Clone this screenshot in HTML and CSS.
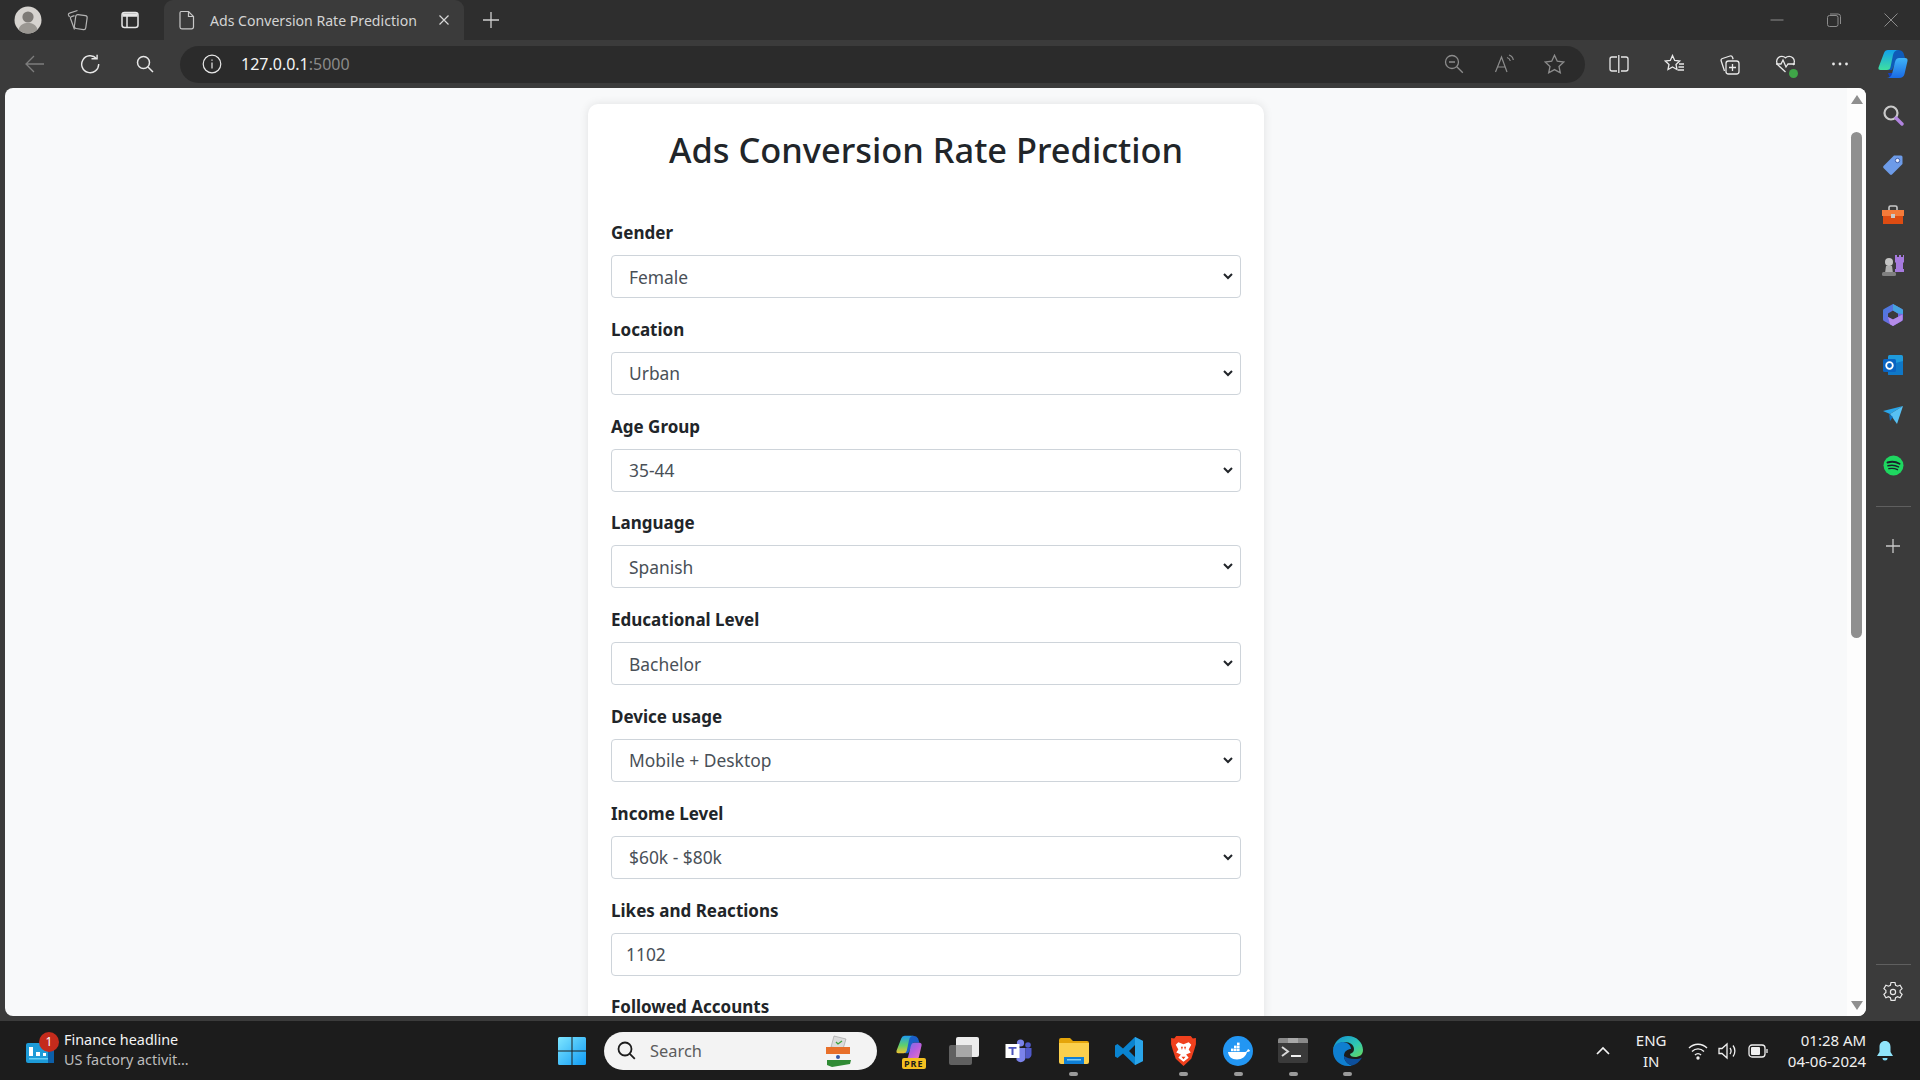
FILE: index.html
```html
<!DOCTYPE html>
<html lang="en">
<head>
    <meta charset="UTF-8">
    <title>Ads Conversion Rate Prediction</title>
    <link rel="stylesheet" href="styles.css">
</head>
<body>
    <div class="tabstrip">
        <div class="avatar">
            <svg width="28" height="28" viewBox="0 0 28 28"><circle cx="14" cy="14" r="13.5" fill="#d6d3cf"/><circle cx="14" cy="11" r="5.6" fill="#7d7a76"/><path d="M4.5 23.5c1.5-5 5-6.5 9.5-6.500s8 1.500 9.500 6.500a13.500 13.500 0 0 1-19 0z" fill="#9a9792"/></svg>
        </div>
        <div class="strip-btn strip-first">
            <svg width="22" height="22" viewBox="0 0 22 22" fill="none" stroke="#b4b4b4" stroke-width="1.2"><path d="M7.500 20.500 3.500 9.500a1.500 1.500 0 0 1 1-1.900l3-1"/><path d="M2.500 8 1.500 6a1.500 1.500 0 0 1 1-1.900L10.500 1.500"/><rect x="8" y="6" width="11.500" height="14" rx="2" transform="rotate(8 13 13)"/></svg>
        </div>
        <div class="strip-btn strip-second">
            <svg width="20" height="20" viewBox="0 0 20 20" fill="none" stroke="#e6e6e6" stroke-width="1.500"><rect x="2" y="2.500" width="16" height="15" rx="2.500"/><path d="M2.500 5h15" stroke-width="3.500"/><path d="M7 6v11"/></svg>
        </div>
        <div class="tab">
            <svg class="tab-icon" width="18" height="20" viewBox="0 0 18 20" fill="none" stroke="#c8c8c8" stroke-width="1.200"><path d="M3 1.500h7.500L15.500 6.500v10.500a1.800 1.800 0 0 1-1.800 1.800H3.800A1.800 1.800 0 0 1 2 17V3a1.500 1.500 0 0 1 1-1.500z"/><path d="M10.500 1.500v5h5"/></svg>
            <span class="tab-title">Ads Conversion Rate Prediction</span>
            <svg class="tab-close" width="12" height="12" viewBox="0 0 12 12" stroke="#d8d8d8" stroke-width="1.200"><path d="M1.500 1.500l9 9M10.500 1.500l-9 9"/></svg>
        </div>
        <div class="new-tab">
            <svg width="18" height="18" viewBox="0 0 18 18" stroke="#d0d0d0" stroke-width="1.300"><path d="M9 1v16M1 9h16"/></svg>
        </div>
        <div class="window-btns">
            <svg width="14" height="14" viewBox="0 0 14 14" stroke="#8c8c8c" stroke-width="1"><path d="M0.500 7h13"/></svg>
            <svg width="14" height="14" viewBox="0 0 14 14" fill="none" stroke="#8c8c8c" stroke-width="1"><rect x="0.500" y="2.500" width="10.500" height="11" rx="2"/><path d="M3 1h8a2.500 2.500 0 0 1 2.500 2.500V11"/></svg>
            <svg width="14" height="14" viewBox="0 0 14 14" stroke="#8c8c8c" stroke-width="1"><path d="M0.500 0.500l13 13M13.500 0.500l-13 13"/></svg>
        </div>
    </div>

    <div class="toolbar">
        <div class="nav-btn">
            <svg width="20" height="18" viewBox="0 0 20 18" fill="none" stroke="#7d7d7d" stroke-width="1.300"><path d="M1 9h18M9 1 1 9l8 8"/></svg>
        </div>
        <div class="nav-btn">
            <svg width="20" height="20" viewBox="0 0 20 20" fill="none" stroke="#e8e8e8" stroke-width="1.400"><path d="M16.500 4.500A8.500 8.500 0 1 0 18.700 10"/><path d="M11.500 4.800h5.600V.8"/></svg>
        </div>
        <div class="nav-btn">
            <svg width="18" height="18" viewBox="0 0 18 18" fill="none" stroke="#e8e8e8" stroke-width="1.500"><circle cx="7.500" cy="7.500" r="6"/><path d="m12 12 5 5"/></svg>
        </div>
        <div class="address">
            <svg class="info" width="20" height="20" viewBox="0 0 20 20" fill="none" stroke="#e8e8e8" stroke-width="1.200"><circle cx="10" cy="10" r="8.800"/><path d="M10 8.500v6M10 5.400v1.400"/></svg>
            <span class="host">127.0.0.1</span><span class="port">:5000</span>
            <div class="address-icons">
                <svg width="20" height="20" viewBox="0 0 20 20" fill="none" stroke="#8c8c8c" stroke-width="1.300"><circle cx="8" cy="8" r="6.500"/><path d="m12.800 12.800 6 6M5 8h6"/></svg>
                <svg width="20" height="20" viewBox="0 0 20 20" fill="none" stroke="#8c8c8c" stroke-width="1.200"><path d="M1.500 18 7.500 3l5.500 15M3.500 13h8"/><path d="M13 3.500c2 .5 3 2 3.300 3.500M15 1c2.500.8 4 2.800 4.300 5"/></svg>
                <svg width="21" height="20" viewBox="0 0 21 20" fill="none" stroke="#8c8c8c" stroke-width="1.300"><path d="m10.500 1.200 2.800 6 6.500.8-4.800 4.400 1.300 6.400-5.800-3.200-5.800 3.200 1.300-6.400L1.200 8l6.500-.8z"/></svg>
            </div>
        </div>
        <div class="tool-icons">
            <svg width="20" height="20" viewBox="0 0 20 20" fill="none" stroke="#e8e8e8" stroke-width="1.300"><path d="M8 3H3a2 2 0 0 0-2 2v10a2 2 0 0 0 2 2h5M12 3h5a2 2 0 0 1 2 2v10a2 2 0 0 1-2 2h-5M9.800 1v18"/></svg>
            <svg width="21" height="20" viewBox="0 0 21 20" fill="none" stroke="#e8e8e8" stroke-width="1.300"><path d="m8.500 1.500 2.200 5 5 .6-3.700 3.400 1 5-4.500-2.600L4 15.500l1-5L1.300 7.100l5-.6z"/><path d="M15 10h5M14.500 13h5.500M14 16h6"/></svg>
            <svg width="21" height="21" viewBox="0 0 21 21" fill="none" stroke="#e8e8e8" stroke-width="1.300"><path d="M5.500 17 2.200 7a2 2 0 0 1 1.300-2.500L11 2a2 2 0 0 1 2.500 1.200l.6 2"/><rect x="7" y="7" width="13" height="13" rx="2.500"/><path d="M13.500 10v7M10 13.500h7"/></svg>
            <span class="health">
                <svg width="21" height="21" viewBox="0 0 21 21" fill="none" stroke="#e8e8e8" stroke-width="1.300"><path d="M10.500 18 3 11a5.200 5.200 0 0 1 7.500-7.200A5.200 5.200 0 0 1 18 11"/><path d="M1 10h5l2-4 3 7 2-3h7"/></svg>
                <span class="health-ok"></span>
            </span>
            <svg width="20" height="20" viewBox="0 0 20 20" fill="#e8e8e8"><circle cx="3.500" cy="10" r="1.400"/><circle cx="10" cy="10" r="1.400"/><circle cx="16.500" cy="10" r="1.400"/></svg>
            <svg class="copilot" width="30" height="30" viewBox="0 0 30 30"><defs><linearGradient id="cpA" x1="0" y1="0" x2="0" y2="1"><stop offset="0" stop-color="#12a0ec"/><stop offset="1" stop-color="#3fe0a0"/></linearGradient><linearGradient id="cpB" x1="0" y1="0" x2="0" y2="1"><stop offset="0" stop-color="#3fb4f8"/><stop offset="1" stop-color="#1a6ae4"/></linearGradient></defs><path d="M15 4Q16 1 20 1t5.500 3L27 9H20l-6 12-4 0z" fill="#0f5bb8"/><path d="M10 24H20l-1.500 5H12z" fill="#1440c0"/><path d="M6 4Q7 1 10 1H20Q16 1.500 15 6L12.500 18Q12 21 9 21H2.500Q0 21 .5 18.500Z" fill="url(#cpA)"/><path d="M21 9H27Q30 9 29.500 12L26.500 25Q25.500 29 21 29H9Q13 28.500 14 25L17 13Q18 9 21 9Z" fill="url(#cpB)"/></svg>
        </div>
    </div>

    <div class="middle">
        <main class="page">
            <div class="viewport">
                <div class="card">
                    <h1>Ads Conversion Rate Prediction</h1>
                    <form>
                        <div class="field">
                            <label for="gender">Gender</label>
                            <select id="gender"><option>Female</option><option>Male</option></select>
                        </div>
                        <div class="field">
                            <label for="location">Location</label>
                            <select id="location"><option>Urban</option><option>Rural</option></select>
                        </div>
                        <div class="field">
                            <label for="age">Age Group</label>
                            <select id="age"><option>35-44</option><option>25-34</option></select>
                        </div>
                        <div class="field">
                            <label for="language">Language</label>
                            <select id="language"><option>Spanish</option><option>English</option></select>
                        </div>
                        <div class="field">
                            <label for="education">Educational Level</label>
                            <select id="education"><option>Bachelor</option><option>Master</option></select>
                        </div>
                        <div class="field">
                            <label for="device">Device usage</label>
                            <select id="device"><option>Mobile + Desktop</option><option>Mobile</option></select>
                        </div>
                        <div class="field">
                            <label for="income">Income Level</label>
                            <select id="income"><option>$60k - $80k</option><option>$40k - $60k</option></select>
                        </div>
                        <div class="field">
                            <label for="likes">Likes and Reactions</label>
                            <input id="likes" type="text" value="1102">
                        </div>
                        <div class="field">
                            <label>Followed Accounts</label>
                        </div>
                    </form>
                </div>
            </div>
            <div class="scrollbar">
                <span class="arrow-up"></span>
                <div class="thumb"></div>
                <span class="arrow-down"></span>
            </div>
        </main>
        <aside class="sidebar">
            <div class="side-item"><svg width="22" height="22" viewBox="0 0 22 22" fill="none"><circle cx="9" cy="9" r="6.500" stroke="#c9c9c9" stroke-width="2.200"/><path d="m14 14 6 6" stroke="#b184e0" stroke-width="3.400" stroke-linecap="round"/></svg></div>
            <div class="side-item"><svg width="22" height="22" viewBox="0 0 22 22"><path d="M12 1.500h7a1.500 1.500 0 0 1 1.500 1.500v7L10 20.500a1.500 1.500 0 0 1-2 0L1.500 14a1.500 1.500 0 0 1 0-2z" fill="#6d9be8"/><circle cx="15.500" cy="6.500" r="2.200" fill="#e8eefc" stroke="#3d5da8"/></svg></div>
            <div class="side-item"><svg width="24" height="22" viewBox="0 0 24 22"><path d="M8 6V3.500A1.500 1.500 0 0 1 9.500 2h5A1.500 1.500 0 0 1 16 3.500V6" fill="none" stroke="#c9c9c9" stroke-width="1.600"/><path d="M1 6h22v6H1z" fill="#f47b3a"/><path d="M2 12h20v8H2z" fill="#dd4c12"/><rect x="10" y="10" width="4" height="4" fill="#c9c9c9"/></svg></div>
            <div class="side-item"><svg width="24" height="24" viewBox="0 0 24 24"><path d="M14 2h2v2h2V2h2v2h2V2h1v7l-1 1v6h1v3H14v-3h1v-6l-1-1z" fill="#a67ade"/><circle cx="8" cy="9" r="4" fill="#c4c4c4"/><path d="M5 13h6l1 7H4z" fill="#b0b0b0"/><rect x="1" y="19" width="14" height="4" rx="1.500" fill="#808080"/></svg></div>
            <div class="side-item"><svg width="22" height="24" viewBox="0 0 22 24"><defs><linearGradient id="msA" x1="0" y1="0" x2="1" y2="1"><stop offset="0" stop-color="#3f7fe0"/><stop offset="1" stop-color="#8c5ce0"/></linearGradient></defs><path d="M11 1 20 6a2 2 0 0 1 1 2v8a2 2 0 0 1-1 2l-9 5-9-5a2 2 0 0 1-1-2V8a2 2 0 0 1 1-2z" fill="url(#msA)"/><path d="M11 7.500 16 10.500v3.500l-5 2.500-5-2.500v-3.500z" fill="#3b3b3b"/><path d="M6 14l5 2.500 9.500-5V16a2 2 0 0 1-1 2L11 23l-3-1.800z" fill="#b48be8"/><path d="M11 1l9 5a2 2 0 0 1 1 2v3l-5-.5-5-3z" fill="#45a3e0"/></svg></div>
            <div class="side-item"><svg width="22" height="22" viewBox="0 0 22 22"><rect x="6" y="1" width="15" height="20" rx="1.500" fill="#1f9bdc"/><path d="M6 11 21 7v13a1 1 0 0 1-1 1H7a1 1 0 0 1-1-1z" fill="#0f78c8"/><rect x="1" y="5" width="13" height="13" rx="1.500" fill="#0a64c2"/><circle cx="7.500" cy="11.500" r="3.300" fill="none" stroke="#fff" stroke-width="1.800"/></svg></div>
            <div class="side-item"><svg width="22" height="20" viewBox="0 0 22 20"><path d="M1 6 21 1 8 9z" fill="#2aa6ea"/><path d="M8 9 21 1 15 19z" fill="#57c1f4"/><path d="M7 9l1 7 3-4z" fill="#0e6fbe"/></svg></div>
            <div class="side-item"><svg width="21" height="21" viewBox="0 0 21 21" fill="none"><circle cx="10.500" cy="10.500" r="10" fill="#1ed760"/><path d="M4.500 7.500c4-1.200 8.500-.8 12 1.200" stroke="#19212a" stroke-width="1.900" stroke-linecap="round"/><path d="M5 10.800c3.500-1 7.300-.6 10.500 1.100" stroke="#19212a" stroke-width="1.600" stroke-linecap="round"/><path d="M5.800 13.700c3-.7 6-.4 8.700 1" stroke="#19212a" stroke-width="1.300" stroke-linecap="round"/></svg></div>
            <hr class="side-rule">
            <div class="side-item side-add"><svg width="16" height="16" viewBox="0 0 16 16" stroke="#c9c9c9" stroke-width="1.300"><path d="M8 1v14M1 8h14"/></svg></div>
            <hr class="side-rule side-rule-low">
            <div class="side-item side-gear"><svg width="22" height="22" viewBox="0 0 22 22" fill="none" stroke="#e8e8e8" stroke-width="1.200"><path d="M9 1.500h4l.6 2.800 1.900.9 2.600-1 2 3.400-2 1.800v2.100l2 1.800-2 3.400-2.600-1-1.900.9-.6 2.800H9l-.6-2.800-1.900-.9-2.600 1-2-3.400 2-1.800V9.400l-2-1.800 2-3.400 2.600 1 1.900-.9z"/><circle cx="11" cy="11" r="2.600"/></svg></div>
        </aside>
    </div>

    <footer class="taskbar">
        <div class="news">
            <span class="news-icon">
                <svg width="28" height="20" viewBox="0 0 28 20"><rect width="28" height="20" rx="2" fill="#1d9bd8"/><rect x="22" width="6" height="20" fill="#0c5fa8"/><rect x="3" y="4" width="4" height="9" fill="#fff"/><rect x="10" y="9" width="4" height="4" fill="#fff"/><rect x="17" y="10" width="3" height="3" fill="#fff"/><rect x="3" y="15" width="19" height="1.500" fill="#65d0f5"/></svg>
                <span class="news-badge">1</span>
            </span>
            <div class="news-text">
                <div class="news-head">Finance headline</div>
                <div class="news-sub">US factory activit...</div>
            </div>
        </div>

        <svg class="start" width="28" height="28" viewBox="0 0 28 28"><defs><linearGradient id="winA" x1="0" y1="0" x2="1" y2="1"><stop offset="0" stop-color="#7fe6ff"/><stop offset="1" stop-color="#0f9bf5"/></linearGradient></defs><path d="M1.500 0H13.500V13.500H0V1.500A1.500 1.500 0 0 1 1.500 0zM14.500 0H26.500A1.500 1.500 0 0 1 28 1.500V13.500H14.500zM0 14.500H13.500V28H1.500A1.500 1.500 0 0 1 0 26.500zM14.500 14.500H28V26.500A1.500 1.500 0 0 1 26.500 28H14.500z" fill="url(#winA)"/></svg>

        <div class="search">
            <svg width="19" height="19" viewBox="0 0 19 19" fill="none" stroke="#1c1c1c" stroke-width="1.800"><circle cx="8" cy="8" r="6.500"/><path d="m12.800 12.800 5 5"/></svg>
            <span class="search-text">Search</span>
            <svg class="search-art" width="26" height="32" viewBox="0 0 26 32"><path d="M9 1 21 4 18 14 6 12z" fill="#dcdcdc" stroke="#9a9a9a" stroke-width=".6"/><path d="m11 7 2 2 4-3" fill="none" stroke="#3da23d" stroke-width="1.300"/><path d="M1 12h24v7H1z" fill="#e8702a"/><path d="M1 19h24v6H1z" fill="#f4f4f4"/><path d="M2 25h24l-1 4-18 3-5-2z" fill="#2f8a34"/><circle cx="13" cy="22" r="2" fill="#3558a8"/></svg>
        </div>

        <div class="apps">
            <span class="app">
                <svg class="app-copilot" width="28" height="26" viewBox="0 0 30 30"><defs><linearGradient id="cpC" x1="0" y1="0" x2="0" y2="1"><stop offset="0" stop-color="#1f9cf0"/><stop offset=".55" stop-color="#5fd06a"/><stop offset="1" stop-color="#f2c230"/></linearGradient><linearGradient id="cpD" x1="0" y1="0" x2="1" y2="1"><stop offset="0" stop-color="#5f7ce8"/><stop offset=".5" stop-color="#b45ee0"/><stop offset="1" stop-color="#f07ac0"/></linearGradient></defs><path d="M15 4Q16 1 20 1t5.500 3L27 9H20l-6 12-4 0z" fill="#1a5fc8"/><path d="M6 4Q7 1 10 1H20Q16 1.500 15 6L12.500 18Q12 21 9 21H2.500Q0 21 .5 18.500Z" fill="url(#cpC)"/><path d="M21 9H27Q30 9 29.500 12L26.500 25Q25.500 29 21 29H9Q13 28.500 14 25L17 13Q18 9 21 9Z" fill="url(#cpD)"/></svg>
                <span class="pre">PRE</span>
            </span>
            <span class="app">
                <svg width="30" height="28" viewBox="0 0 30 28"><rect x="0" y="8" width="23" height="20" rx="2" fill="#606060"/><rect x="7" y="0" width="23" height="20" rx="2" fill="#ececec"/><rect x="7" y="8" width="16" height="12" fill="#a8a8a8"/></svg>
            </span>
            <span class="app">
                <svg width="27" height="24" viewBox="0 0 26 24"><circle cx="15" cy="4" r="3.600" fill="#7b83eb"/><circle cx="22.500" cy="6" r="2.800" fill="#5059c9"/><path d="M11 9h9v10a5 5 0 0 1-9 2z" fill="#7b83eb"/><path d="M20 9h6v7a4 4 0 0 1-6 3z" fill="#5059c9"/><rect x="0" y="5" width="14" height="14" fill="#fff"/><path d="M3 8h8v1.800H8V16H6V9.800H3z" fill="#4b53bc"/></svg>
            </span>
            <span class="app app-running">
                <svg width="30" height="28" viewBox="0 0 30 28"><path d="M0 3a2 2 0 0 1 2-2h9l3 3h14a2 2 0 0 1 2 2v4H0z" fill="#e5a50a"/><path d="M0 6h30v19a2 2 0 0 1-2 2H2a2 2 0 0 1-2-2z" fill="#fbd04d"/><path d="M5 20h20v7H5z" fill="#0f7fd6"/><rect x="8" y="22" width="14" height="1.500" fill="#7fcdf5"/></svg>
            </span>
            <span class="app">
                <svg width="28" height="28" viewBox="0 0 28 28"><path d="M20 0 28 4v20l-8 4L8 16.500 2.500 21 0 19.500V8.500L2.500 7 8 11.500zM20 8l-6 6 6 6z" fill="#0a84d0"/><path d="M20 0 28 4v20l-8 4z" fill="#2aa5ea"/></svg>
            </span>
            <span class="app app-running">
                <svg width="25" height="30" viewBox="0 0 24 29"><path d="M5 0h14l2 2.500L24 2v6l-1.500 5-3 9L12 29l-7.500-7-3-9L0 8V2l3 .5z" fill="#f0401d"/><path d="M12 8 7 6 4.500 8.500 7 13l-2 3 4.500 2L7 21l5 4 5-4-2.500-3 4.500-2-2-3 2.500-4.500L17 6z" fill="#fff"/><path d="M9.500 10.500h2l-1 3zM12.500 10.500h2l-1 3zM10 20h4l-2 2.500z" fill="#f0401d"/></svg>
            </span>
            <span class="app app-running">
                <svg width="30" height="30" viewBox="0 0 30 30"><circle cx="15" cy="15" r="15" fill="#2296f3"/><path d="M5 16h17c1.500 0 2.500-1.500 3-3 1 .5 2 1.200 2 2-1 .6-2 .9-3 1-1 4.500-5 7.500-10 7.500-5.500 0-8.500-3-9-7.500z" fill="#fff"/><g fill="#fff"><rect x="8" y="12.600" width="2.600" height="2.600"/><rect x="11" y="12.600" width="2.600" height="2.600"/><rect x="14" y="12.600" width="2.600" height="2.600"/><rect x="11" y="9.600" width="2.600" height="2.600"/><rect x="14" y="9.600" width="2.600" height="2.600"/><rect x="14" y="6.600" width="2.600" height="2.600"/></g></svg>
            </span>
            <span class="app app-running">
                <svg width="30" height="25" viewBox="0 0 30 25"><rect width="30" height="25" rx="2" fill="#3a3a3a"/><path d="M0 2a2 2 0 0 1 2-2h26a2 2 0 0 1 2 2v3H0z" fill="#8a8a8a"/><path d="M10 0h10v5H10z" fill="#a8a8a8"/><path d="m4 9 6 4.500-6 4.500" fill="none" stroke="#d8d8d8" stroke-width="2"/><path d="M13 18h10" stroke="#f0f0f0" stroke-width="2"/></svg>
            </span>
            <span class="app app-running">
                <svg width="30" height="30" viewBox="0 0 30 30"><defs><linearGradient id="edA" x1="0" y1="0" x2="1" y2="1"><stop offset="0" stop-color="#0f8fd8"/><stop offset=".6" stop-color="#30c8b0"/><stop offset="1" stop-color="#6ad85a"/></linearGradient></defs><path d="M15 0C24 0 30 7 30 14 30 19 26 21 22 21 19 21 17 20 17 18 20 17 21 15 21 13 21 9 17 6 12 6 7 6 2 9 0 14 1 6 7 0 15 0Z" fill="url(#edA)"/><path d="M0 15C0 10 4 6 10 6c4 0 8 3 8 7-3 0-7 2-7 7 0 4 3 8 8 9.500-1 .4-3 .5-4 .5C6 30 0 23 0 15Z" fill="#0f7fd0"/><path d="M11 20c0 4 3 8 8 9.500 4-1 8-4 10-8-2 1-4 1.500-7 1.500-5 0-8-1-11-3z" fill="#0c4f9c"/></svg>
            </span>
        </div>

        <div class="tray">
            <svg class="tray-chevron" width="14" height="9" viewBox="0 0 14 9" fill="none" stroke="#f4f4f4" stroke-width="1.700"><path d="m1 8 6-6 6 6"/></svg>
            <div class="lang">ENG<br>IN</div>
            <svg width="20" height="18" viewBox="0 0 20 18" fill="none" stroke="#f0f0f0" stroke-width="1.400"><path d="M1 6c5-5 13-5 18 0M4 9.500c3.500-3.500 8.500-3.500 12 0M7 13c1.700-1.800 4.300-1.800 6 0"/><circle cx="10" cy="16" r="1" fill="#f0f0f0"/></svg>
            <svg width="20" height="18" viewBox="0 0 20 18" fill="none" stroke="#f0f0f0" stroke-width="1.300"><path d="M1 6.500v5h3l5 4.500V2L4 6.500z"/><path d="M12 6c1.300 1.800 1.300 4.200 0 6M15 3.500c2.500 3.200 2.500 7.800 0 11"/></svg>
            <svg width="20" height="14" viewBox="0 0 20 14" fill="none" stroke="#f0f0f0" stroke-width="1.300"><rect x="1" y="1" width="16" height="12" rx="3"/><rect x="3" y="3" width="9" height="8" rx="1" fill="#f0f0f0" stroke="none"/><path d="M19 5v4"/></svg>
            <div class="clock">01:28 AM<br>04-06-2024</div>
            <svg class="bell" width="16" height="20" viewBox="0 0 16 20"><path d="M8 0c3.500 0 5.500 2.500 5.500 6v5l2.500 4H0l2.500-4V6C2.500 2.500 4.500 0 8 0z" fill="#8fe4fb"/><path d="M5.500 17h5a2.500 2.500 0 0 1-5 0z" fill="#7fd8f5"/></svg>
        </div>
    </footer>
</body>
</html>
```

FILE: styles.css
```css
html, body {
    margin: 0;
    height: 1080px;
    overflow: hidden;
}
body {
    display: flex;
    flex-direction: column;
    font-family: "Noto Sans", "Open Sans", sans-serif;
    background-color: #3b3b3b;
}
svg {
    display: block;
    flex: none;
}

/* tab strip */
.tabstrip {
    display: flex;
    align-items: center;
    height: 40px;
    padding-left: 14px;
    background-color: #2e2e2e;
    flex: none;
}
.avatar {
    width: 28px;
}
.strip-btn {
    display: flex;
    justify-content: center;
}
.strip-first {
    width: 44px;
    margin-left: 14px;
}
.strip-second {
    width: 60px;
}
.tab {
    display: flex;
    align-items: center;
    align-self: stretch;
    width: 300px;
    margin-left: 4px;
    padding: 0 14px;
    box-sizing: border-box;
    background-color: #3b3b3b;
    border-radius: 9px 9px 0 0;
    flex: none;
}
.tab-title {
    flex: 1;
    margin-left: 14px;
    font-size: 14.1px;
    color: #d4d4d4;
    white-space: nowrap;
}
.new-tab {
    margin-left: 18px;
}
.window-btns {
    display: flex;
    gap: 43px;
    margin-left: auto;
    padding-right: 22px;
}

/* toolbar */
.toolbar {
    display: flex;
    align-items: center;
    height: 48px;
    padding-left: 7px;
    background-color: #3b3b3b;
    flex: none;
}
.nav-btn {
    display: flex;
    justify-content: center;
    width: 55px;
}
.address {
    display: flex;
    align-items: center;
    width: 1405px;
    height: 37px;
    margin-left: 8px;
    padding: 0 20px 0 22px;
    box-sizing: border-box;
    background-color: #2b2b2b;
    border-radius: 19px;
    font-size: 16px;
}
.info {
    margin-right: 19px;
}
.host {
    color: #f4f4f4;
}
.port {
    color: #8a8a8a;
}
.address-icons {
    display: flex;
    gap: 30px;
    margin-left: auto;
}
.tool-icons {
    display: flex;
    align-items: center;
    gap: 34.6px;
    margin-left: 24px;
}
.tool-icons .copilot {
    margin-left: -7px;
}
.health {
    position: relative;
    display: block;
}
.health-ok {
    position: absolute;
    right: -2px;
    bottom: -3px;
    width: 9px;
    height: 9px;
    border-radius: 50%;
    background-color: #3fa648;
}

/* page area */
.middle {
    display: flex;
    height: 928px;
    flex: none;
}
.page {
    display: flex;
    flex: 1;
    min-width: 0;
    margin-left: 5px;
    overflow: hidden;
    background-color: #f8f9fa;
    border-radius: 8px;
}
.viewport {
    flex: 1;
    min-width: 0;
    padding-top: 16px;
}
.card {
    width: 676px;
    margin-left: 583px;
    padding: 23px 23px 0;
    box-sizing: border-box;
    background-color: #fff;
    border-radius: 10px;
    box-shadow: 0 0 10px rgba(0, 0, 0, 0.1);
}
h1 {
    margin: 0 0 45px;
    font-size: 34.4px;
    font-weight: 500;
    line-height: 46px;
    text-align: center;
    color: #212529;
}
.field {
    height: 96.8px;
}
label {
    display: block;
    margin-bottom: 8px;
    font-size: 17px;
    font-weight: 700;
    line-height: 29px;
    color: #212529;
}
select, input {
    display: block;
    width: 100%;
    height: 43px;
    box-sizing: border-box;
    background-color: #fff;
    border: 1px solid #ced4da;
    border-radius: 4px;
    font-family: inherit;
    font-size: 17.4px;
    color: #495057;
}
select {
    padding: 0 28px 0 17px;
    appearance: none;
    background-image: url("data:image/svg+xml,%3Csvg xmlns='http://www.w3.org/2000/svg' width='10' height='7' viewBox='0 0 10 7'%3E%3Cpath d='M1 1l4 4 4-4' fill='none' stroke='%23212529' stroke-width='2'/%3E%3C/svg%3E");
    background-repeat: no-repeat;
    background-position: right 7px center;
}
input {
    padding: 0 14px;
}
.scrollbar {
    display: flex;
    flex-direction: column;
    align-items: center;
    width: 19px;
    padding-top: 7px;
    box-sizing: border-box;
    background-color: #fdfdfd;
}
.arrow-up {
    width: 0;
    height: 0;
    border: 6px solid transparent;
    border-top: none;
    border-bottom: 9px solid #8f8f8f;
}
.thumb {
    width: 11px;
    height: 506px;
    margin-top: 28px;
    background-color: #8f8f8f;
    border-radius: 6px;
}
.arrow-down {
    width: 0;
    height: 0;
    margin-top: auto;
    margin-bottom: 6px;
    border: 6px solid transparent;
    border-bottom: none;
    border-top: 9px solid #8f8f8f;
}

/* edge sidebar */
.sidebar {
    display: flex;
    flex-direction: column;
    align-items: center;
    width: 54px;
    padding-top: 2px;
    box-sizing: border-box;
    background-color: #3b3b3b;
}
.side-item {
    display: flex;
    align-items: center;
    justify-content: center;
    height: 50px;
    flex: none;
}
.side-rule {
    width: 35px;
    height: 1px;
    margin: 16px 0 14px;
    border: none;
    background-color: #5f5f5f;
    flex: none;
}
.side-rule-low {
    margin: auto 0 3px;
}
.side-gear {
    height: 48px;
}

/* taskbar */
.taskbar {
    display: flex;
    align-items: center;
    height: 59px;
    margin-top: 5px;
    background-color: #1c1c1c;
    flex: none;
}
.news {
    display: flex;
    align-items: center;
    width: 558px;
    padding-left: 26px;
    box-sizing: border-box;
}
.news-icon {
    position: relative;
    display: block;
    margin-top: 4px;
}
.news-badge {
    position: absolute;
    top: -11px;
    left: 13px;
    width: 20px;
    height: 20px;
    background-color: #c42b1c;
    border-radius: 50%;
    font-size: 12px;
    line-height: 20px;
    text-align: center;
    color: #fff;
}
.news-text {
    margin-top: -2px;
    margin-left: 10px;
    font-size: 14.4px;
    line-height: 20px;
}
.news-head {
    color: #f4f4f4;
}
.news-sub {
    color: #bdbdbd;
}
.search {
    display: flex;
    align-items: center;
    width: 273px;
    height: 38px;
    margin-left: 18px;
    padding: 0 26px 0 13px;
    box-sizing: border-box;
    background-color: #f3f3f3;
    border-radius: 19px;
}
.search-text {
    margin-left: 14px;
    font-size: 16.4px;
    color: #5c5c5c;
}
.search-art {
    margin-left: auto;
}
.apps {
    display: flex;
    align-items: center;
    margin-left: 5px;
}
.app {
    position: relative;
    display: flex;
    align-items: center;
    justify-content: center;
    width: 54.8px;
    height: 40px;
}
.app-running::after {
    content: "";
    position: absolute;
    left: 23px;
    bottom: -5px;
    width: 9px;
    height: 4px;
    background-color: #9a9a9a;
    border-radius: 2px;
}
.app-copilot {
    margin-top: -6px;
}
.pre {
    position: absolute;
    left: 20px;
    bottom: 2px;
    padding: 0 2px;
    background-color: #f4c020;
    border-radius: 2px;
    font-size: 9px;
    font-weight: 700;
    line-height: 11px;
    letter-spacing: 1px;
    color: #1c1c1c;
}
.tray {
    display: flex;
    align-items: center;
    flex: 1;
    color: #f0f0f0;
    font-size: 15px;
}
.tray-chevron {
    margin-left: 221px;
}
.lang {
    width: 34px;
    margin: 0 20px 0 24px;
    line-height: 21px;
    text-align: center;
}
.tray svg + svg {
    margin-left: 10px;
}
.clock {
    width: 90px;
    margin-left: 8px;
    line-height: 21px;
    text-align: right;
}
.tray svg.bell {
    margin-left: 11px;
}
```
